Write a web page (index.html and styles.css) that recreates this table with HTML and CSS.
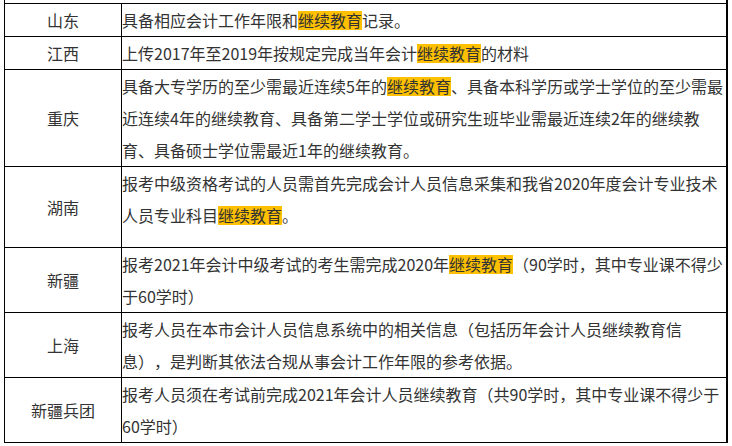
FILE: index.html
```html
<!DOCTYPE html>
<html lang="zh-CN">
<head>
<meta charset="utf-8">
<link rel="stylesheet" href="styles.css">
</head>
<body>
<div class="table">
  <div class="row first">
    <div class="label">山东</div>
    <div class="text">具备相应会计工作年限和<span class="hl">继续教育</span>记录。</div>
  </div>
  <div class="row">
    <div class="label">江西</div>
    <div class="text">上传2017年至2019年按规定完成当年会计<span class="hl">继续教育</span>的材料</div>
  </div>
  <div class="row">
    <div class="label">重庆</div>
    <div class="text">具备大专学历的至少需最近连续5年的<span class="hl">继续教育</span>、具备本科学历或学士学位的至少需最近连续4年的继续教育、具备第二学士学位或研究生班毕业需最近连续2年的继续教育、具备硕士学位需最近1年的继续教育。</div>
  </div>
  <div class="row">
    <div class="label">湖南</div>
    <div class="text extra">报考中级资格考试的人员需首先完成会计人员信息采集和我省2020年度会计专业技术人员专业科目<span class="hl">继续教育</span>。</div>
  </div>
  <div class="row">
    <div class="label">新疆</div>
    <div class="text">报考2021年会计中级考试的考生需完成2020年<span class="hl">继续教育</span>（90学时，其中专业课不得少于60学时）</div>
  </div>
  <div class="row">
    <div class="label">上海</div>
    <div class="text">报考人员在本市会计人员信息系统中的相关信息（包括历年会计人员继续教育信息），是判断其依法合规从事会计工作年限的参考依据。</div>
  </div>
  <div class="row">
    <div class="label">新疆兵团</div>
    <div class="text">报考人员须在考试前完成2021年会计人员继续教育（共90学时，其中专业课不得少于60学时）</div>
  </div>
</div>
</body>
</html>
```

FILE: styles.css
```css
html, body {
  margin: 0;
  padding: 0;
  background: #fff;
}
body {
  font-family: "Noto Sans CJK SC", "Noto Sans", sans-serif;
  font-size: 16px;
  color: #333;
  text-spacing-trim: space-all;
}
.table {
  margin-left: 4px;
  width: 724px;
  box-sizing: border-box;
  border-left: 1px solid #000;
  border-right: 2px solid #000;
  padding-top: 3px;
}
.row {
  display: grid;
  grid-template-columns: 117px 1fr;
  border-bottom: 1px solid #000;
}
.row.first {
  border-top: 1px solid #000;
}
.label {
  border-right: 1px solid #000;
  display: flex;
  align-items: center;
  justify-content: center;
  line-height: 32px;
}
.text {
  line-height: 32px;
  padding: 0;
  text-spacing-trim: space-all;
}
.text.extra {
  padding-bottom: 16px;
}
.hl {
  background: #ffc000;
  display: inline-block;
  line-height: 19px;
}
```
